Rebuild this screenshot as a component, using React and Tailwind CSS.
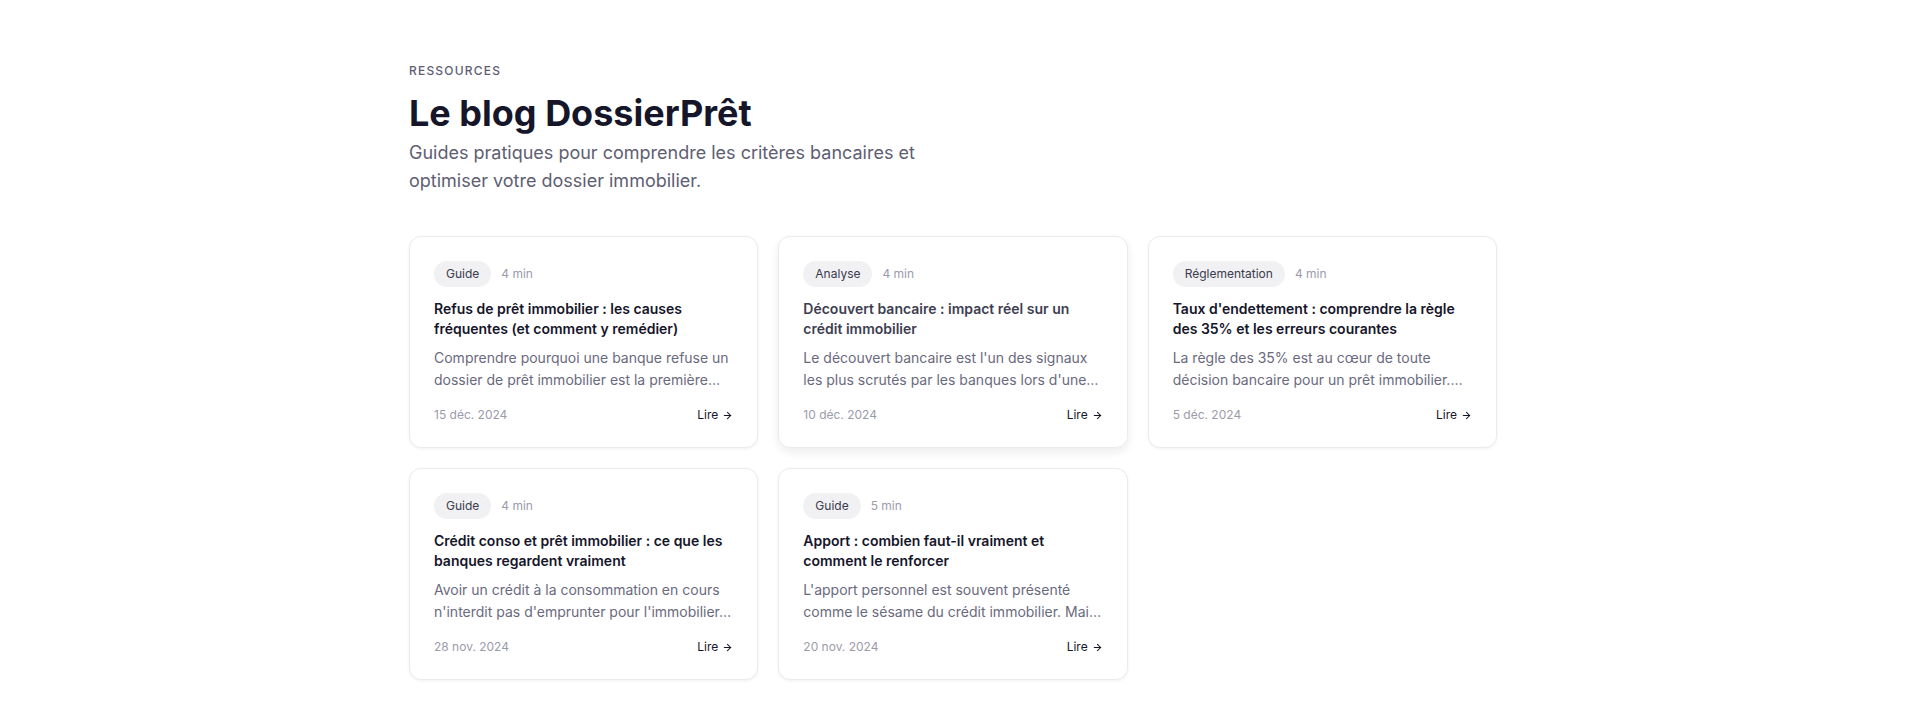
import { ArrowRight } from 'lucide-react';

const POSTS = [
  {
    tag: 'Guide',
    time: '4 min',
    title: 'Refus de prêt immobilier : les causes fréquentes (et comment y remédier)',
    excerpt: "Comprendre pourquoi une banque refuse un dossier de prêt immobilier est la première étape pour y remédier.",
    date: '15 déc. 2024',
  },
  {
    tag: 'Analyse',
    time: '4 min',
    title: 'Découvert bancaire : impact réel sur un crédit immobilier',
    excerpt: "Le découvert bancaire est l'un des signaux les plus scrutés par les banques lors d'une demande de prêt.",
    date: '10 déc. 2024',
    hover: true,
  },
  {
    tag: 'Réglementation',
    time: '4 min',
    title: "Taux d'endettement : comprendre la règle des 35% et les erreurs courantes",
    excerpt: 'La règle des 35% est au cœur de toute décision bancaire pour un prêt immobilier. Voici comment elle est calculée.',
    date: '5 déc. 2024',
  },
  {
    tag: 'Guide',
    time: '4 min',
    title: 'Crédit conso et prêt immobilier : ce que les banques regardent vraiment',
    excerpt: "Avoir un crédit à la consommation en cours n'interdit pas d'emprunter pour l'immobilier, mais il faut savoir comment.",
    date: '28 nov. 2024',
  },
  {
    tag: 'Guide',
    time: '5 min',
    title: 'Apport : combien faut-il vraiment et comment le renforcer',
    excerpt: "L'apport personnel est souvent présenté comme le sésame du crédit immobilier. Mais qu'en est-il vraiment ?",
    date: '20 nov. 2024',
  },
];

function PostCard({ post }) {
  return (
    <a
      href="#"
      className={
        'flex flex-col rounded-xl border border-[#ebebef] bg-white p-6 ' +
        (post.hover ? 'shadow-[0_4px_10px_rgba(20,20,40,0.08)]' : 'shadow-[0_1px_3px_rgba(20,20,40,0.06)]')
      }
    >
      {/* Tag + reading time */}
      <div className="mb-3 flex items-center gap-2.5">
        <span className="rounded-full bg-[#f1f1f4] px-3 py-[5px] text-xs leading-4 text-[#3a3a4c]">{post.tag}</span>
        <span className="text-xs text-[#9b9bab]">{post.time}</span>
      </div>
      <h3
        className={
          'mb-2 text-sm font-semibold leading-5 ' + (post.hover ? 'text-[#3e3e51]' : 'text-[#16162a]')
        }
      >
        {post.title}
      </h3>
      <p className="line-clamp-2 text-sm leading-[22px] text-[#6a6a7e]">{post.excerpt}</p>
      <div className="mt-4 flex items-center justify-between text-xs leading-4">
        <span className="text-[#9b9bab]">{post.date}</span>
        <span className="flex items-center gap-1 text-[#16162a]">
          Lire <ArrowRight size={11} strokeWidth={2.25} />
        </span>
      </div>
    </a>
  );
}

export default function App() {
  return (
    <main className="min-h-screen bg-white font-['Inter',sans-serif]">
      <section className="mx-auto max-w-6xl px-8 pt-[63px] pb-10">
        {/* Header */}
        <p className="mb-3.5 text-xs font-medium uppercase leading-4 tracking-widest text-[#5e5e72]">Ressources</p>
        <h1 className="text-4xl font-bold text-[#16162a]">Le blog DossierPrêt</h1>
        <p className="mt-1.5 max-w-xl text-lg leading-7 text-[#5e5e72]">
          Guides pratiques pour comprendre les critères bancaires et optimiser votre dossier immobilier.
        </p>

        {/* Posts */}
        <div className="mt-[41px] grid grid-cols-3 gap-5">
          {POSTS.map((post) => (
            <PostCard key={post.title} post={post} />
          ))}
        </div>
      </section>
    </main>
  );
}
